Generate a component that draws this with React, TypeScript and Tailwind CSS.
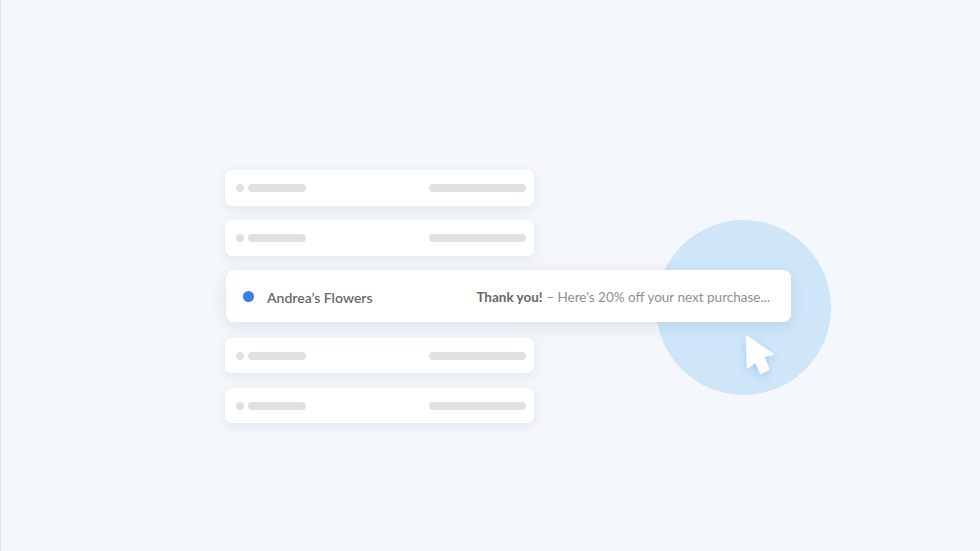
import React from "react";

function SkeletonRow({ h = "h-[36px]" }: { h?: string }) {
  return (
    <div
      className={`${h} w-[309px] rounded-[7px] bg-white shadow-[0_3px_12px_rgba(120,140,170,0.14)] flex items-center justify-between pl-[11px] pr-[8px]`}
    >
      <div className="flex items-center gap-[4px]">
        <div className="w-[8px] h-[8px] rounded-full bg-[#e1e1e1]" />
        <div className="w-[58px] h-[8px] rounded-full bg-[#e1e1e1]" />
      </div>
      <div className="w-[97px] h-[8px] rounded-full bg-[#e1e1e1]" />
    </div>
  );
}

export default function App() {
  return (
    <div
      className="relative w-[980px] h-[551px] overflow-hidden bg-[#f4f7fb] border-l border-[#e2e6eb]"
      style={{ fontFamily: 'Lato, "Open Sans", sans-serif' }}
    >
      {/* decorative circle */}
      <div className="absolute left-[655px] top-[220px] w-[175px] h-[175px] rounded-full bg-[#cee6f8]" />

      <div className="relative flex flex-col pt-[170px] pl-[224px]">
        <SkeletonRow />
        <div className="mt-[14px]">
          <SkeletonRow />
        </div>
        <div className="mt-[14px] ml-[1px] w-[565px] h-[52px] rounded-[8px] bg-white shadow-[0_4px_16px_rgba(110,130,160,0.18)] flex items-center justify-between pl-[17px] pr-[21px]">
          <div className="flex items-center gap-[13px]">
            <div className="w-[11px] h-[11px] rounded-full bg-[#3a7fe6]" />
            <span className="text-[14px] font-semibold text-[#666a6e] translate-y-[1px]">
              Andrea’s Flowers
            </span>
          </div>
          <div className="text-[13.5px] text-[#8c8f93] translate-y-[1px]">
            <span className="font-bold text-[#66696d]">Thank you!</span>
            <span> – Here's 20% off your next purchase...</span>
          </div>
        </div>
        <div className="mt-[16px]">
          <SkeletonRow h="h-[35px]" />
        </div>
        <div className="mt-[15px]">
          <SkeletonRow h="h-[35px]" />
        </div>
      </div>

      {/* cursor */}
      <svg
        className="absolute left-[739px] top-[331px]"
        width="42"
        height="50"
        viewBox="0 0 42 50"
        style={{ filter: "drop-shadow(0 3px 4px rgba(80,120,170,0.25))" }}
      >
        <path
          d="M7 6 L32 23 L23 25 L28 38 L21 42 L16 30 L8 36 Z"
          fill="#ffffff"
          stroke="#ffffff"
          strokeWidth="2.5"
          strokeLinejoin="round"
        />
      </svg>
    </div>
  );
}
